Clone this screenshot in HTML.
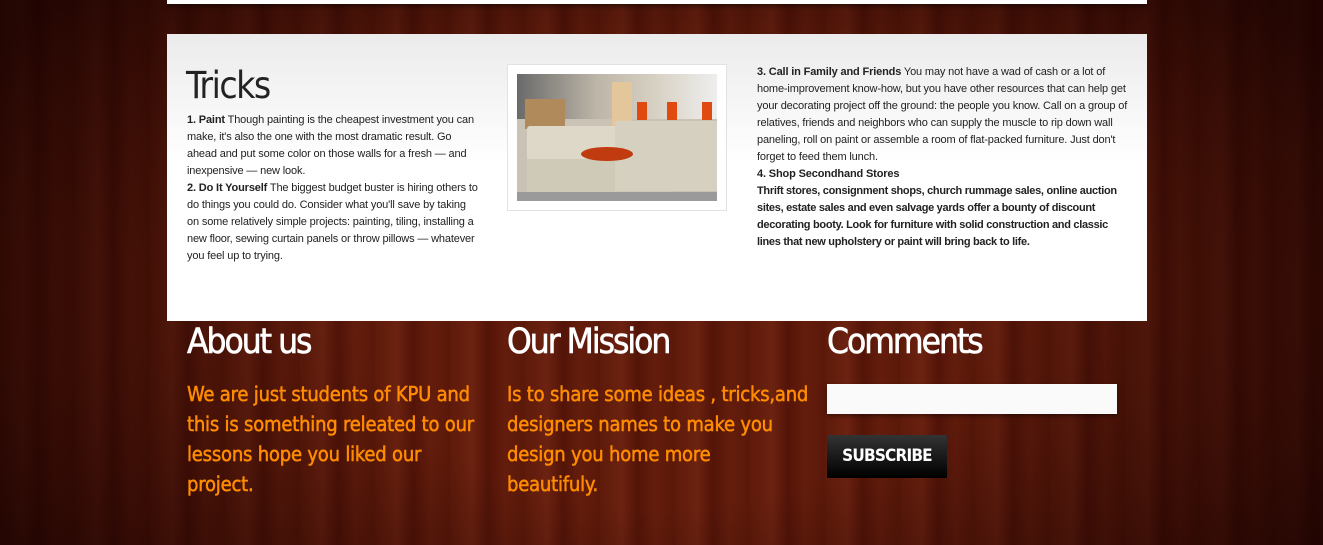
<!DOCTYPE html>
<html><head><meta charset="utf-8"><style>
html,body{margin:0;padding:0}
body{width:1323px;height:545px;overflow:hidden;position:relative;font-family:"Liberation Sans",Arial,sans-serif;
background:
radial-gradient(ellipse 750px 520px at 660px 300px, rgba(90,25,5,0) 0%, rgba(90,25,5,0) 40%, rgba(20,0,0,0.8) 100%),
repeating-linear-gradient(90deg,#5e1a0a 0px,#6c2210 22px,#531408 38px,#641d0c 55px,#5a1809 75px),
#551608;}
.topbar{position:absolute;left:167px;top:0;width:980px;height:4px;background:#fff;box-shadow:0 2px 4px rgba(0,0,0,.5)}
.panel{position:absolute;left:167px;top:34px;width:980px;height:287px;background:linear-gradient(#ebebeb,#fff 45%,#fff)}
.col{position:absolute;font-size:11px;line-height:17px;color:#222;letter-spacing:-0.15px}
h2{margin:0;font-weight:normal}
.tricks{position:absolute;left:186px;top:64px;font-size:37px;color:#222;letter-spacing:-1.5px;font-family:"DejaVu Sans Condensed",sans-serif}
.frame{position:absolute;left:507px;top:64px;width:218px;height:145px;border:1px solid #e2e2e2;background:#fff}
.img{position:absolute;left:9px;top:9px;width:200px;height:127px;overflow:hidden;background:#c9c2b5}
.ft{position:absolute;color:#fff;font-size:35px;font-family:"DejaVu Sans Condensed",sans-serif;letter-spacing:-2px;top:322px;-webkit-text-stroke:0.6px #fff}
.or{position:absolute;color:#ff8c00;font-size:20px;line-height:30px;top:379px;font-family:"DejaVu Sans Condensed",sans-serif;letter-spacing:-0.2px;width:330px;white-space:nowrap;-webkit-text-stroke:0.5px #ff8c00}
.inp{position:absolute;left:827px;top:384px;width:290px;height:30px;background:#fafafa;box-shadow:0 2px 4px rgba(0,0,0,.4)}
.btn{position:absolute;left:827px;top:435px;width:120px;height:43px;background:linear-gradient(#333,#000);color:#fff;font-weight:bold;font-size:17px;line-height:43px;text-align:center;font-family:"DejaVu Sans Condensed",sans-serif;letter-spacing:-0.8px}
</style></head><body>
<div class="topbar"></div>
<div class="panel"></div>
<h2 class="tricks">Tricks</h2>
<div class="col" style="left:187px;top:112px;width:292px"><b>1. Paint</b> Though painting is the cheapest investment you can make, it's also the one with the most dramatic result. Go ahead and put some color on those walls for a fresh — and inexpensive — new look.<br><b>2. Do It Yourself</b> The biggest budget buster is hiring others to do things you could do. Consider what you'll save by taking on some relatively simple projects: painting, tiling, installing a new floor, sewing curtain panels or throw pillows — whatever you feel up to trying.</div>
<div class="frame"><div class="img">
<div style="position:absolute;left:0;top:0;width:200px;height:45px;background:linear-gradient(90deg,#6a6a6a,#bdb6a8 40%,#d8d2c4 70%,#eee)"></div>
<div style="position:absolute;left:8px;top:25px;width:40px;height:30px;background:#b08a5a"></div>
<div style="position:absolute;left:95px;top:8px;width:20px;height:48px;background:#e3c79a"></div>
<div style="position:absolute;left:120px;top:28px;width:10px;height:18px;background:#e04a10"></div>
<div style="position:absolute;left:150px;top:28px;width:10px;height:18px;background:#e04a10"></div>
<div style="position:absolute;left:185px;top:28px;width:10px;height:18px;background:#e04a10"></div>
<div style="position:absolute;left:10px;top:52px;width:135px;height:70px;background:#ddd8c8;border-radius:3px"></div>
<div style="position:absolute;left:10px;top:85px;width:145px;height:35px;background:#cfc9b8"></div>
<div style="position:absolute;left:98px;top:47px;width:102px;height:70px;background:#d6d0c0"></div>
<div style="position:absolute;left:64px;top:73px;width:52px;height:14px;background:#c03c10;border-radius:50%"></div>
<div style="position:absolute;left:0;top:118px;width:200px;height:9px;background:#9a9a9a"></div>
</div></div>
<div class="col" style="left:757px;top:64px;width:375px"><b>3. Call in Family and Friends</b> You may not have a wad of cash or a lot of home-improvement know-how, but you have other resources that can help get your decorating project off the ground: the people you know. Call on a group of relatives, friends and neighbors who can supply the muscle to rip down wall paneling, roll on paint or assemble a room of flat-packed furniture. Just don't forget to feed them lunch.<br><b>4. Shop Secondhand Stores<br><span style="letter-spacing:-0.3px">Thrift stores, consignment shops, church rummage sales, online auction sites, estate sales and even salvage yards offer a bounty of discount decorating booty. Look for furniture with solid construction and classic lines that new upholstery or paint will bring back to life.</span></b></div>
<h2 class="ft" style="left:187px">About us</h2>
<h2 class="ft" style="left:507px">Our Mission</h2>
<h2 class="ft" style="left:827px">Comments</h2>
<div class="or" style="left:187px">We are just students of KPU and<br>this is something releated to our<br>lessons hope you liked our<br>project.</div>
<div class="or" style="left:507px">Is to share some ideas , tricks,and<br>designers names to make you<br>design you home more<br>beautifuly.</div>
<div class="inp"></div>
<div class="btn">SUBSCRIBE</div>
</body></html>
